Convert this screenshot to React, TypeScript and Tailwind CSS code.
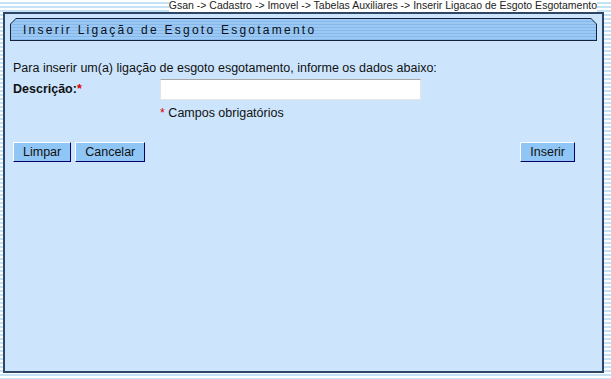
const FONT = "font-['Liberation_Sans',Arial,sans-serif]";

function Btn({ label }: { label: string }) {
  return (
    <button
      type="button"
      className="h-[20px] border border-t-white border-l-white border-r-[#000066] border-b-[#000066] bg-[#90c6f6] px-[9px] text-[12.5px] leading-none text-[#111]"
    >
      {label}
    </button>
  );
}

export default function App() {
  return (
    <div
      className={`${FONT} h-[379px] w-[611px] overflow-hidden bg-[repeating-linear-gradient(to_bottom,#ffffff_0px,#ffffff_2px,#c4e2f6_2px,#c4e2f6_4px)] text-black`}
    >
      {/* breadcrumb */}
      <div className="flex h-[12px] justify-end pr-[14px]">
        <span className="bg-white text-[10.5px] leading-[11px] text-[#222]">
          Gsan -&gt; Cadastro -&gt; Imovel -&gt; Tabelas Auxiliares -&gt; Inserir Ligacao de Esgoto Esgotamento
        </span>
      </div>

      {/* main panel */}
      <div className="ml-[3px] flex h-[361px] w-[601px] flex-col border-2 border-[#2e4566] bg-[#cce5fd] px-[5px] pt-[4px]">
        {/* title bar */}
        <div className="h-[23px] bg-[#14233d] p-px [clip-path:polygon(6px_0,calc(100%-6px)_0,100%_6px,100%_100%,0_100%,0_6px)]">
          <div className="flex h-full items-center bg-[repeating-linear-gradient(to_bottom,#9cc9f3_0px,#9cc9f3_2px,#86b8eb_2px,#86b8eb_3px)] pl-[12px] text-[12px] tracking-[2.25px] text-[#0a1020] [clip-path:polygon(5px_0,calc(100%-5px)_0,100%_5px,100%_100%,0_100%,0_5px)]">
            Inserir Ligação de Esgoto Esgotamento
          </div>
        </div>

        <div className="flex flex-col pl-[3px] pt-[20px] text-[12.5px] text-[#111]">
          <p className="leading-[14px]">
            Para inserir um(a) ligação de esgoto esgotamento, informe os dados abaixo:
          </p>
          <div className="mt-[4px] flex items-center">
            <label className="w-[147px] font-bold">
              Descrição:<span className="text-[#e00000]">*</span>
            </label>
            <input
              type="text"
              className="h-[21px] w-[261px] border border-[#e4e4e4] border-t-[#a8a8a8] bg-white outline-none"
            />
          </div>
          <div className="mt-[6px] pl-[147px] leading-[14px]">
            <span className="text-[#e00000]">*</span> Campos obrigatórios
          </div>

          <div className="mt-[22px] flex items-center pr-[22px]">
            <div className="flex gap-[4px]">
              <Btn label="Limpar" />
              <Btn label="Cancelar" />
            </div>
            <div className="ml-auto">
              <Btn label="Inserir" />
            </div>
          </div>
        </div>
      </div>
    </div>
  );
}
